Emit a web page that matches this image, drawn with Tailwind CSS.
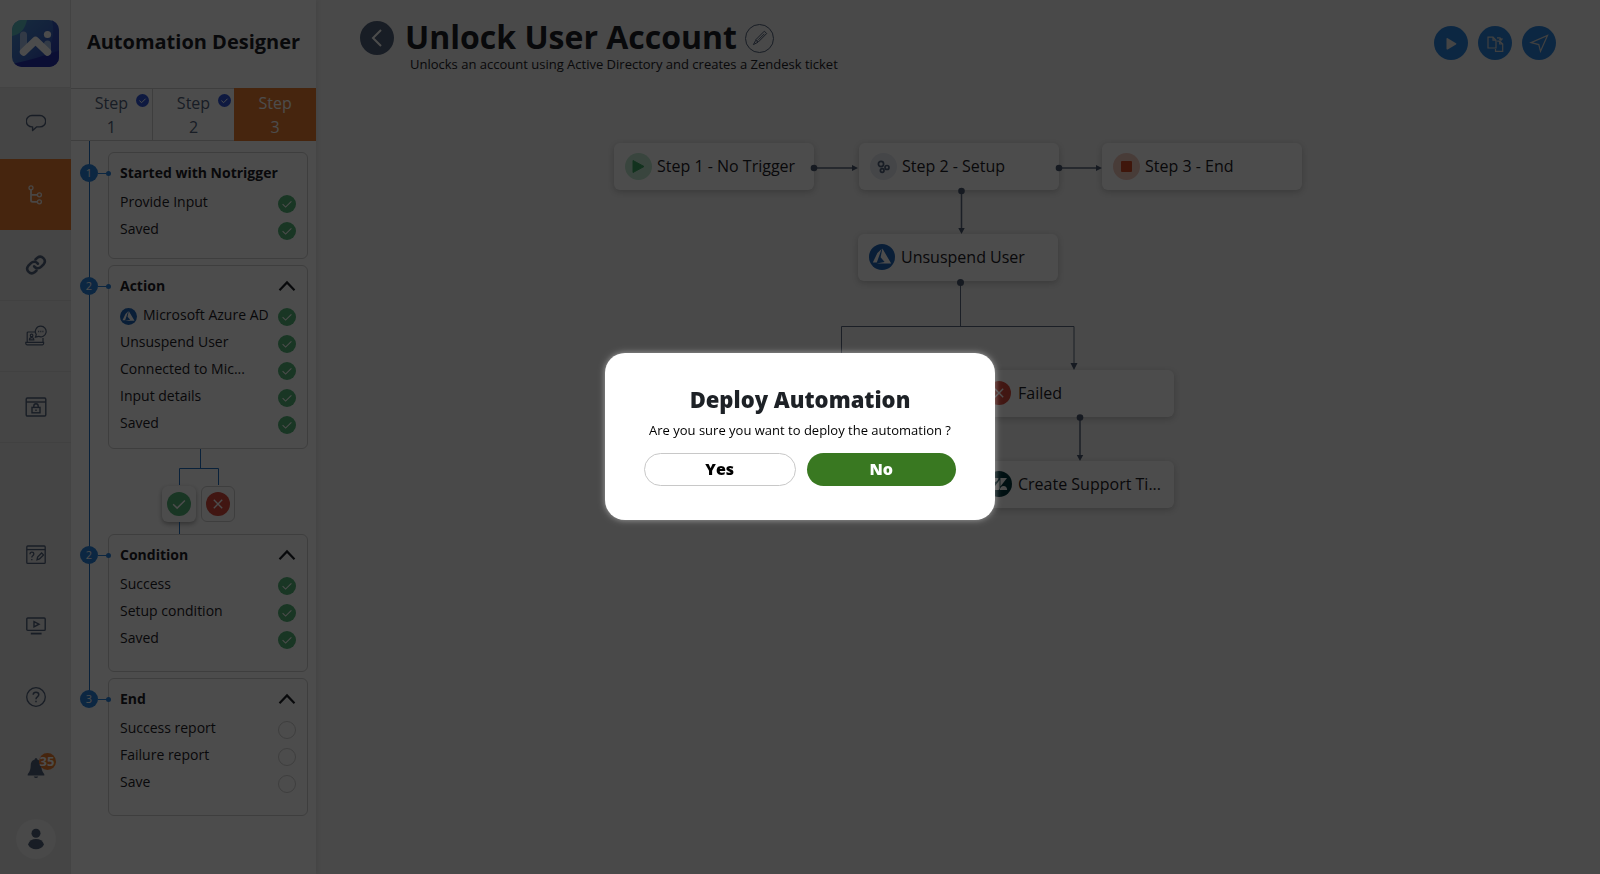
<!DOCTYPE html>
<html lang="en">
<head>
  <meta charset="utf-8">
  <title>Automation Designer</title>
  <script src="https://cdn.jsdelivr.net/npm/@tailwindcss/browser@4"></script>
</head>
<body class="font-['Open_Sans','Noto_Sans',sans-serif] text-[#1d2126] bg-[#f3f3f3]">
  <!-- shared shapes -->
  <svg class="hidden">
    <symbol id="check" viewBox="0 0 18 18">
      <circle cx="9" cy="9" r="9" fill="#54b478" />
      <path d="M4.6 9.2l3 2.9 5.8-5.8" fill="none" stroke="#fff" stroke-width="1.1" />
    </symbol>
    <symbol id="cross" viewBox="0 0 24 24">
      <circle cx="12" cy="12" r="12" fill="#d94a3c" />
      <path d="M7.8 7.8l8.4 8.4M16.2 7.8l-8.4 8.4" fill="none" stroke="#fff" stroke-width="1.4" />
    </symbol>
    <symbol id="azure" viewBox="0 0 26 26">
      <circle cx="13" cy="13" r="13" fill="#1f66b8" />
      <path d="M12.6 5L8.4 9 3.8 18.6h4zM13.4 4.6L22.2 19.4H7.600l8-1.500-4-4.700z" fill="#fff" />
    </symbol>
    <symbol id="up" viewBox="0 0 18 12">
      <path d="M1.500 10.200L9 2.400l7.500 7.800" fill="none" stroke="#1d2126" stroke-width="2.200" />
    </symbol>
  </svg>

  <div class="flex min-h-screen">
    <nav class="w-[71px] shrink-0 flex flex-col bg-[#e6e6e6] text-[#52627c]">
      <a href="#" class="h-[88px] flex items-center justify-center bg-[#f7f7f7] border-b border-r border-[#e0e0e0]" aria-label="Home">
        <svg class="size-[47px]" viewBox="0 0 47 47">
          <defs>
            <linearGradient id="logo" x1="0" y1="0" x2="1" y2="1">
              <stop offset="0" stop-color="#4b8fd0" />
              <stop offset="0.5" stop-color="#3f6fc8" />
              <stop offset="1" stop-color="#2c35b4" />
            </linearGradient>
            <clipPath id="logo-clip"><rect width="47" height="47" rx="10" /></clipPath>
          </defs>
          <g clip-path="url(#logo-clip)">
            <rect width="47" height="47" fill="url(#logo)" />
            <path d="M0 0h15Q12 14 0 16z" fill="#5fc0c4" />
            <path d="M0 47V44Q28 38 47 30V47z" fill="#2630b0" />
            <path d="M40 0Q45 24 30 36L47 31V0z" fill="#2f45b8" opacity=".6" />
            <path d="M11.5 15V30M35.5 24v8" stroke="#a9c2ea" stroke-width="7" stroke-linecap="round" />
            <path d="M11.5 32L23.5 20.5 35.5 32" fill="none" stroke="#fff" stroke-width="7.4" stroke-linecap="round" stroke-linejoin="round" />
            <circle cx="35.5" cy="14.5" r="3.6" fill="#fff" />
          </g>
        </svg>
      </a>
      <a href="#" class="h-[71px] flex items-center justify-center" aria-label="Chat">
        <svg class="size-5" viewBox="0 0 20 20" fill="none" stroke="currentColor" stroke-width="1.4">
          <path d="M6 1.500h8a5.400 5.400 0 0 1 0 11.400H10.500L6.600 16.500v-3.600H6A5.600 5.600 0 0 1 6 1.500z" stroke-linejoin="round" />
        </svg>
      </a>
      <a href="#" class="h-[71px] flex items-center justify-center bg-[#ec7d31] text-[#f3ece6]" aria-label="Automations" aria-current="page">
        <svg class="size-5" viewBox="0 0 20 20" fill="none" stroke="currentColor" stroke-width="1.3">
          <circle cx="5" cy="2.8" r="2" /><circle cx="13.4" cy="9.800" r="2" /><circle cx="13.4" cy="16.8" r="2" />
          <path d="M5 5v10.3q0 1.6 1.6 1.6h4.8M5 9.8h6.4" stroke-width="1.8" />
        </svg>
      </a>
      <a href="#" class="h-[71px] flex items-center justify-center border-b border-[#dadada]" aria-label="Connections">
        <svg class="size-[22px]" viewBox="0 0 24 24" fill="none" stroke="currentColor" stroke-width="2.8" stroke-linecap="round">
          <path d="M10 13.5a5 5 0 0 0 7.5.5l3-3a5 5 0 0 0-7-7l-2 2" /><path d="M14 10.500a5 5 0 0 0-7.500-.5l-3 3a5 5 0 0 0 7 7l2-2" />
        </svg>
      </a>
      <a href="#" class="h-[71px] flex items-center justify-center border-b border-[#dadada]" aria-label="Live agent">
        <svg class="size-[22px]" viewBox="0 0 22 22" fill="none" stroke="currentColor" stroke-width="1.2">
          <path d="M10 7H3.200q-1 0-1 1v9M18 13v4M.8 17.400h17.800v1.200q0 1.200-1.200 1.200H2q-1.200 0-1.200-1.200z" />
          <path d="M15.800 1.200a5.300 5.300 0 1 1-2.200 10.100l-3.100.9.8-2.700a5.300 5.300 0 0 1 4.500-8.300z" />
          <circle cx="6.600" cy="10.400" r="1.300" /><path d="M4.400 14.800q0-2.200 2.200-2.200t2.200 2.200z" />
          <path d="M13.200 6.500h1M15.300 6.500h1M17.400 6.500h1" stroke-width="1.4" />
        </svg>
      </a>
      <a href="#" class="h-[71px] flex items-center justify-center border-b border-[#dadada]" aria-label="Vault">
        <svg class="size-[22px]" viewBox="0 0 22 22" fill="none" stroke="currentColor" stroke-width="1.4">
          <rect x="1.200" y="2" width="19.600" height="18" rx="1.200" /><path d="M1.200 6h19.600" />
          <rect x="7" y="11.400" width="8" height="5.400" /><path d="M8.800 11.400V10a2.200 2.200 0 0 1 4.400 0v1.400M11 13.400v1.600" />
        </svg>
      </a>
      <div class="mt-auto">
        <a href="#" class="h-[71px] flex items-center justify-center" aria-label="Surveys">
          <svg class="size-[22px]" viewBox="0 0 22 22" fill="none" stroke="currentColor" stroke-width="1.3">
            <rect x="1.800" y="2" width="18.400" height="17.400" rx="1" /><path d="M1.800 5.600h18.400" />
            <path d="M5 10.200q0-2 1.900-2t1.900 1.800q0 1-1 1.700t-1 1.700M6.800 15v1.200M12 15.800l.6-2.800 4-4 1.900 1.900-4 4z" />
          </svg>
        </a>
        <a href="#" class="h-[71px] flex items-center justify-center" aria-label="Videos">
          <svg class="size-[22px]" viewBox="0 0 22 22" fill="none" stroke="currentColor" stroke-width="1.4">
            <rect x="1.800" y="3" width="18.400" height="12.400" rx="1" /><path d="M9 6.600l5 2.600-5 2.600z" /><path d="M5.800 18.600h10.800" stroke-width="1.800" />
          </svg>
        </a>
        <a href="#" class="h-[71px] flex items-center justify-center" aria-label="Help">
          <svg class="size-[22px]" viewBox="0 0 22 22" fill="none" stroke="currentColor" stroke-width="1.300">
            <circle cx="11" cy="11" r="9.300" /><path d="M8.200 8.700Q8.300 6.200 11 6.200t2.800 2.400q0 1.300-1.400 2.200T11 13.200M11 14.800v1.500" stroke-width="1.500" />
          </svg>
        </a>
        <a href="#" class="h-[71px] flex items-center justify-center" aria-label="Notifications">
          <span class="relative">
            <svg class="size-[22px]" viewBox="0 0 22 22" fill="currentColor">
              <path d="M11 1q1.300 0 1.300 1.500 4 1.100 4 6 0 5.500 3 8.700v1.300H2.700v-1.300q3-3.200 3-8.700 0-4.900 4-6Q9.700 1 11 1zM8.800 19.400h4.400q-.6 1.600-2.200 1.600t-2.200-1.600z" />
            </svg>
            <span class="absolute -top-1 left-[14px] size-[17px] rounded-full bg-[#ec7d31] text-white text-[13px] leading-[17px] font-bold flex justify-center">35</span>
          </span>
        </a>
        <a href="#" class="h-[71px] flex items-center justify-center" aria-label="Profile">
          <span class="size-10 rounded-full bg-[#f3f3f3] flex items-center justify-center">
            <svg class="size-[22px]" viewBox="0 0 22 22" fill="currentColor"><circle cx="11" cy="5.200" r="4.500" /><path d="M3 16.400Q5 11 11 11t8 5.400Q16.500 21.200 11 21.200T3 16.400z" /></svg>
          </span>
        </a>
      </div>
    </nav>

    <aside class="w-[245px] shrink-0 bg-white shadow-[2px_0_4px_rgba(0,0,0,0.06)]">
      <h2 class="h-[88px] pb-1 flex items-center justify-center text-[20px] font-bold">Automation Designer</h2>
      <div class="grid grid-cols-3 text-center text-[16px] leading-6 text-[#52627c]">
        <button class="relative h-[53px] px-5 border-y border-r border-[#d0d0d0]">Step 1
          <svg class="absolute top-[5px] right-[3px] size-[13px]" viewBox="0 0 13 13"><circle cx="6.500" cy="6.500" r="6.500" fill="#2f55d8" /><path d="M3.400 6.600l2.200 2.100 4-4" fill="none" stroke="#fff" /></svg>
        </button>
        <button class="relative h-[53px] px-5 border-y border-[#d0d0d0]">Step 2
          <svg class="absolute top-[5px] right-[3px] size-[13px]" viewBox="0 0 13 13"><circle cx="6.500" cy="6.500" r="6.500" fill="#2f55d8" /><path d="M3.400 6.600l2.200 2.100 4-4" fill="none" stroke="#fff" /></svg>
        </button>
        <button class="h-[53px] px-5 bg-[#ec7d31] text-white font-medium">Step 3</button>
      </div>

      <ol class="relative pt-[11px] pl-[37px] pr-2 text-[14px]">
        <li class="absolute left-[18px] top-0 bottom-[116px] w-px bg-[#1f6fc4]" aria-hidden="true"></li>

        <li class="relative mb-[6px] rounded-md border border-[#cfcfcf] px-[11px] pb-4">
          <span class="absolute -left-[29px] top-[11px] size-[18px] rounded-full bg-[#2b83dc] text-white text-[11px] leading-[18px] text-center">1</span>
          <span class="absolute -left-[11px] top-5 w-[11px] h-px bg-[#2b83dc]"></span>
          <span class="absolute -left-[3px] top-[18px] size-[5px] rounded-full bg-[#2b83dc]"></span>
          <h3 class="h-[35px] pt-1 flex items-center font-bold">Started with Notrigger</h3>
          <div class="h-[27px] flex items-center justify-between"><span>Provide Input</span><svg class="size-[18px] mt-1"><use href="#check" /></svg></div>
          <div class="h-[27px] flex items-center justify-between"><span>Saved</span><svg class="size-[18px] mt-1"><use href="#check" /></svg></div>
        </li>

        <li class="relative rounded-md border border-[#cfcfcf] px-[11px] pb-3">
          <span class="absolute -left-[29px] top-[11px] size-[18px] rounded-full bg-[#2b83dc] text-white text-[11px] leading-[18px] text-center">2</span>
          <span class="absolute -left-[11px] top-5 w-[11px] h-px bg-[#2b83dc]"></span>
          <span class="absolute -left-[3px] top-[18px] size-[5px] rounded-full bg-[#2b83dc]"></span>
          <h3 class="h-[35px] pt-1 flex items-center justify-between font-bold">Action<button aria-label="Collapse"><svg class="w-[18px] h-3"><use href="#up" /></svg></button></h3>
          <div class="h-[27px] flex items-center justify-between">
            <span class="flex items-center gap-[6px] whitespace-nowrap"><svg class="size-[17px] mt-1"><use href="#azure" /></svg>Microsoft Azure AD</span>
            <svg class="size-[18px] shrink-0 mt-1"><use href="#check" /></svg>
          </div>
          <div class="h-[27px] flex items-center justify-between"><span>Unsuspend User</span><svg class="size-[18px] mt-1"><use href="#check" /></svg></div>
          <div class="h-[27px] flex items-center justify-between"><span>Connected to Mic...</span><svg class="size-[18px] mt-1"><use href="#check" /></svg></div>
          <div class="h-[27px] flex items-center justify-between"><span>Input details</span><svg class="size-[18px] mt-1"><use href="#check" /></svg></div>
          <div class="h-[27px] flex items-center justify-between"><span>Saved</span><svg class="size-[18px] mt-1"><use href="#check" /></svg></div>
        </li>

        <!-- success / failure branch -->
        <li class="flex flex-col items-center pr-[19px]">
          <svg class="w-10 h-[37px]" viewBox="0 0 40 37" fill="none" stroke="#1f6fc4"><path d="M.5 36V19.500h39V36M21.500 0v19" /></svg>
          <div class="flex gap-[5px]">
            <button class="w-[34px] h-[36px] rounded-md bg-white shadow-[0_2px_5px_rgba(0,0,0,0.35)] flex items-center justify-center" aria-label="Success"><svg class="size-6"><use href="#check" /></svg></button>
            <button class="w-[34px] h-[36px] rounded-md border border-[#cfcfcf] flex items-center justify-center" aria-label="Failure"><svg class="size-6"><use href="#cross" /></svg></button>
          </div>
          <svg class="w-10 h-3" viewBox="0 0 40 12" stroke="#1f6fc4"><path d="M.5 0v12" /></svg>
        </li>

        <li class="relative mb-[6px] rounded-md border border-[#cfcfcf] px-[11px] pb-5">
          <span class="absolute -left-[29px] top-[11px] size-[18px] rounded-full bg-[#2b83dc] text-white text-[11px] leading-[18px] text-center">2</span>
          <span class="absolute -left-[11px] top-5 w-[11px] h-px bg-[#2b83dc]"></span>
          <span class="absolute -left-[3px] top-[18px] size-[5px] rounded-full bg-[#2b83dc]"></span>
          <h3 class="h-[35px] pt-1 flex items-center justify-between font-bold">Condition<button aria-label="Collapse"><svg class="w-[18px] h-3"><use href="#up" /></svg></button></h3>
          <div class="h-[27px] flex items-center justify-between"><span>Success</span><svg class="size-[18px] mt-1"><use href="#check" /></svg></div>
          <div class="h-[27px] flex items-center justify-between"><span>Setup condition</span><svg class="size-[18px] mt-1"><use href="#check" /></svg></div>
          <div class="h-[27px] flex items-center justify-between"><span>Saved</span><svg class="size-[18px] mt-1"><use href="#check" /></svg></div>
        </li>

        <li class="relative rounded-md border border-[#cfcfcf] px-[11px] pb-5">
          <span class="absolute -left-[29px] top-[11px] size-[18px] rounded-full bg-[#2b83dc] text-white text-[11px] leading-[18px] text-center">3</span>
          <span class="absolute -left-[11px] top-5 w-[11px] h-px bg-[#2b83dc]"></span>
          <span class="absolute -left-[3px] top-[18px] size-[5px] rounded-full bg-[#2b83dc]"></span>
          <h3 class="h-[35px] pt-1 flex items-center justify-between font-bold">End<button aria-label="Collapse"><svg class="w-[18px] h-3"><use href="#up" /></svg></button></h3>
          <div class="h-[27px] flex items-center justify-between"><span>Success report</span><span class="size-[18px] mt-1 rounded-full border border-[#cfcfcf]"></span></div>
          <div class="h-[27px] flex items-center justify-between"><span>Failure report</span><span class="size-[18px] mt-1 rounded-full border border-[#cfcfcf]"></span></div>
          <div class="h-[27px] flex items-center justify-between"><span>Save</span><span class="size-[18px] mt-1 rounded-full border border-[#cfcfcf]"></span></div>
        </li>
      </ol>
    </aside>

    <main class="flex-1 min-w-0">
      <header class="h-[143px] flex justify-between pl-11 pr-11 pt-5">
        <div>
          <div class="h-9 flex items-center">
            <button class="size-[34px] rounded-full bg-[#52627c] flex items-center justify-center" aria-label="Back">
              <svg class="size-5" viewBox="0 0 20 20" fill="none" stroke="#fff" stroke-width="2"><path d="M14 2L6 10l8 8" /></svg>
            </button>
            <h1 class="ml-[11px] pb-0.5 text-[32px] leading-8 font-bold">Unlock User Account</h1>
            <button class="ml-2 size-[29px] rounded-full border border-[#52627c] text-[#52627c] flex items-center justify-center" aria-label="Rename">
              <svg class="size-4" viewBox="0 0 16 16" fill="none" stroke="currentColor"><path d="M4 9.500L12.300 1.200l2.400 2.300-8.300 8.400zM3.800 10.200l2.200 2-4.600 2.400zM6.400 9.800l6-6" /></svg>
            </button>
          </div>
          <p class="ml-[50px] text-[13px] leading-4">Unlocks an account using Active Directory and creates a Zendesk ticket</p>
        </div>
        <div class="flex gap-[10px] pt-[6px]">
          <button class="size-[34px] rounded-full bg-[#2b83dc] flex items-center justify-center" aria-label="Run">
            <svg class="size-5" viewBox="0 0 20 20" fill="#e8e8e8"><path d="M5.500 6q0-1.400 1.200-.8l8.300 5q.9.600 0 1.200l-8.300 5q-1.200.6-1.200-.8z" /></svg>
          </button>
          <button class="size-[34px] rounded-full bg-[#2b83dc] flex items-center justify-center" aria-label="Duplicate">
            <svg class="size-5" viewBox="0 0 20 20" fill="none" stroke="#d8d8d8" stroke-width="1.200"><path d="M3 4.200h5l3 3V15H3zM8 4.200v3h3M10.500 16v2.300h7.200V11l-3-2.800h-2.500M14.700 8.200V11h3M12 4.800h2.500q1.500 0 1.500 1.700M14.300 6l1.700 1.200L17.500 5.500" /></svg>
          </button>
          <button class="size-[34px] rounded-full bg-[#2b83dc] flex items-center justify-center" aria-label="Deploy">
            <svg class="size-5" viewBox="0 0 20 20" fill="none" stroke="#d8d8d8" stroke-width="1.200"><path d="M18.500 2.500L11.500 18.300 9.800 11.600 2 9.600z" /></svg>
          </button>
        </div>
      </header>

      <!-- flow canvas -->
      <div class="relative w-[688px] h-[366px] mx-auto text-[16px] whitespace-nowrap">
        <div class="absolute left-0 top-0 w-[200px] h-[47px] rounded-md bg-white shadow-[0_2px_6px_rgba(0,0,0,0.2)] flex items-center gap-[5px] pl-[11px] pb-px">
          <svg class="size-[27px]" viewBox="0 0 27 27"><circle cx="13.500" cy="13.500" r="13.500" fill="#bfe8cf" /><path d="M8 7.500l11 6-11 6z" fill="#3fa866" stroke="#3fa866" stroke-linejoin="round" /></svg>
          Step 1 - No Trigger
        </div>
        <div class="absolute left-[245px] top-0 w-[200px] h-[47px] rounded-md bg-white shadow-[0_2px_6px_rgba(0,0,0,0.2)] flex items-center gap-[5px] pl-[11px] pb-px">
          <svg class="size-[27px]" viewBox="0 0 27 27"><circle cx="13.500" cy="13.500" r="13.500" fill="#e6eaf2" /><g fill="none" stroke="#52627c" stroke-width="1.700"><circle cx="11" cy="11" r="2.600" /><circle cx="17" cy="14.500" r="2" /><circle cx="12.200" cy="17.500" r="1.800" /></g></svg>
          Step 2 - Setup
        </div>
        <div class="absolute left-[488px] top-0 w-[200px] h-[47px] rounded-md bg-white shadow-[0_2px_6px_rgba(0,0,0,0.2)] flex items-center gap-[5px] pl-[11px] pb-px">
          <svg class="size-[27px]" viewBox="0 0 27 27"><circle cx="13.500" cy="13.500" r="13.500" fill="#f2c8bd" /><rect x="8" y="8" width="11" height="11" rx="1" fill="#d24a26" /></svg>
          Step 3 - End
        </div>
        <div class="absolute left-[244px] top-[91px] w-[200px] h-[47px] rounded-md bg-white shadow-[0_2px_6px_rgba(0,0,0,0.2)] flex items-center gap-[6px] pl-[11px] pb-px">
          <svg class="size-[26px]"><use href="#azure" /></svg>
          Unsuspend User
        </div>
        <div class="absolute left-[360px] top-[227px] w-[200px] h-[47px] rounded-md bg-white shadow-[0_2px_6px_rgba(0,0,0,0.2)] flex items-center gap-[6px] pl-3 pb-px">
          <svg class="size-6 mx-px"><use href="#cross" /></svg>
          Failed
        </div>
        <div class="absolute left-[360px] top-[318px] w-[200px] h-[47px] rounded-md bg-white shadow-[0_2px_6px_rgba(0,0,0,0.2)] flex items-center gap-[6px] pl-3 pb-px">
          <svg class="size-[26px]" viewBox="0 0 26 26"><circle cx="13" cy="13" r="13" fill="#03363d" /><path d="M13.600 17.800V9L6 19h6.400q.6 0 1.200-1.200zM5 7h7.400q-.6 4-4 4T5 7zM13.800 19q.6-4 3.800-4t3.600 4zM14.400 15.600V7H21z" fill="#fff" /></svg>
          Create Support Ti...
        </div>
        <svg class="absolute inset-0" viewBox="0 0 688 366" fill="none" stroke="#5b6880">
          <path d="M200 25h40M445 25h40M347.500 48v38M466 275v38" stroke-width="1.500" />
          <path d="M346.500 140v43M227.500 227v-43.500h232.500V223" />
          <g fill="#4a5870" stroke="none">
            <circle cx="200" cy="25" r="3.300" /><circle cx="445" cy="25" r="3.300" /><circle cx="347.500" cy="48" r="3.300" />
            <circle cx="346.500" cy="139.500" r="3.500" /><circle cx="466" cy="274.500" r="3.300" />
            <path d="M238 22l6 3-6 3zM482 22l6 3-6 3zM344.300 85l3.200 6 3.200-6zM456.500 220l3.500 7 3.500-7zM462.800 312l3.200 6 3.200-6z" />
          </g>
        </svg>
      </div>
    </main>
  </div>

  <div class="fixed inset-0 pb-0.5 bg-black/70 flex items-center justify-center">
    <div role="dialog" aria-modal="true" aria-labelledby="deploy-title" class="w-[390px] rounded-[20px] bg-white shadow-[0_0_6px_rgba(255,255,255,0.5)] px-[39px] pt-[30px] pb-[34px] text-center">
      <h2 id="deploy-title" class="text-[22px] leading-8 font-extrabold">Deploy Automation</h2>
      <p class="mt-[5px] mb-[13px] text-[13px] leading-5 text-black whitespace-nowrap">Are you sure you want to deploy the automation ?</p>
      <div class="flex gap-[11px] text-[16px] font-extrabold">
        <button class="flex-1 h-[33px] rounded-full border border-[#c8c8c8] text-black">Yes</button>
        <button class="flex-1 h-[33px] rounded-full bg-[#397821] text-white">No</button>
      </div>
    </div>
  </div>
</body>
</html>
